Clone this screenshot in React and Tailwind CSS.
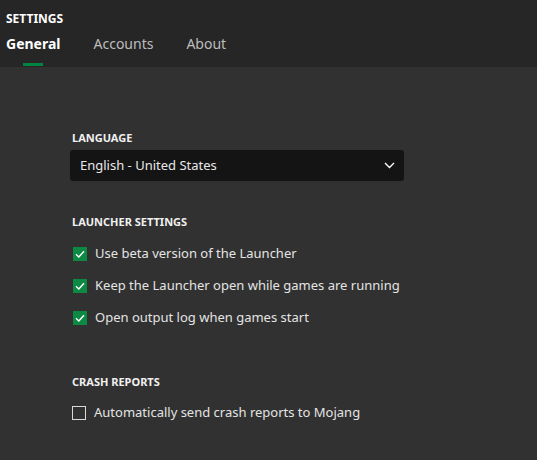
import { useState } from "react";

const font = { fontFamily: '"Noto Sans", "Open Sans", sans-serif' };

const Check = ({ checked, onChange, label }) => (
  <label className="flex items-center h-[32px] cursor-pointer" onClick={onChange}>
    <span
      className={`w-[14px] h-[14px] flex items-center justify-center ${
        checked ? "bg-[#0c8a43]" : "border border-[#d8d8d8]"
      }`}
    >
      {checked && (
        <svg width="10" height="8" viewBox="0 0 10 8" fill="none">
          <path d="M1 4.2 L3.8 7 L9 1.2" stroke="white" strokeWidth="1.4" />
        </svg>
      )}
    </span>
    <span className="ml-[8px] text-[13px] text-[#e4e4e4]">{label}</span>
  </label>
);

export default function App() {
  const [opts, setOpts] = useState([true, true, true, false]);
  const toggle = (i) => setOpts(opts.map((v, j) => (j === i ? !v : v)));

  return (
    <div className="w-[537px] h-[460px] bg-[#313131] overflow-hidden" style={font}>
      {/* Header */}
      <div className="h-[67px] bg-[#262626] px-[6px] pt-[11px]">
        <div className="text-[12px] font-bold text-white leading-[16px]">SETTINGS</div>
        <div className="flex gap-[33px] mt-[6px]">
          <div className="relative text-[14px] font-bold text-white leading-[22px]">
            General
            <span className="absolute left-[17px] top-[30px] w-[20px] h-[3px] bg-[#008542]"></span>
          </div>
          <div className="text-[14px] text-[#bdbdbd] leading-[22px]">Accounts</div>
          <div className="text-[14px] text-[#bdbdbd] leading-[22px]">About</div>
        </div>
      </div>

      {/* Content */}
      <div className="pl-[70px] pt-[63px]">
        <div className="pl-[2px] text-[11px] font-bold text-[#f0f0f0] leading-[16px]">LANGUAGE</div>
        <div className="mt-[4px] w-[334px] h-[31px] bg-[#141414] rounded-[3px] flex items-center justify-between pl-[10px] pr-[9px]">
          <span className="text-[13px] text-[#e8e8e8]">English - United States</span>
          <svg width="11" height="7" viewBox="0 0 11 7" fill="none">
            <path d="M1 1 L5.5 5.5 L10 1" stroke="white" strokeWidth="1.4" />
          </svg>
        </div>

        <div className="mt-[33px] pl-[2px] text-[11px] font-bold text-[#f0f0f0] leading-[16px]">LAUNCHER SETTINGS</div>
        <div className="mt-[8px] pl-[3px]">
          <Check checked={opts[0]} onChange={() => toggle(0)} label="Use beta version of the Launcher" />
          <Check checked={opts[1]} onChange={() => toggle(1)} label="Keep the Launcher open while games are running" />
          <Check checked={opts[2]} onChange={() => toggle(2)} label="Open output log when games start" />
        </div>

        <div className="mt-[40px] pl-[2px] text-[11px] font-bold text-[#f0f0f0] leading-[16px]">CRASH REPORTS</div>
        <div className="mt-[7px] pl-[2px]">
          <Check checked={opts[3]} onChange={() => toggle(3)} label="Automatically send crash reports to Mojang" />
        </div>
      </div>
    </div>
  );
}
